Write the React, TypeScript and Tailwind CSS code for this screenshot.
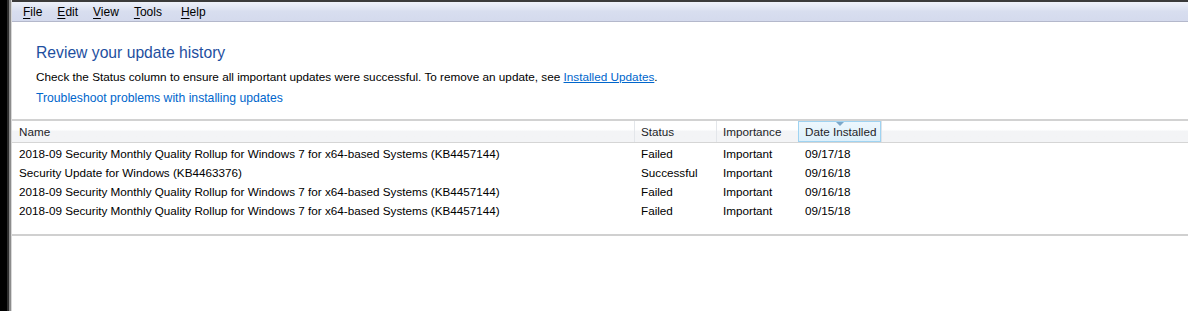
import React from 'react';

const menu = [
	{ key: 'F', rest: 'ile' },
	{ key: 'E', rest: 'dit' },
	{ key: 'V', rest: 'iew' },
	{ key: 'T', rest: 'ools' },
	{ key: 'H', rest: 'elp' },
];

const updates = [
	{ name: '2018-09 Security Monthly Quality Rollup for Windows 7 for x64-based Systems (KB4457144)', status: 'Failed', date: '09/17/18' },
	{ name: 'Security Update for Windows (KB4463376)', status: 'Successful', date: '09/16/18' },
	{ name: '2018-09 Security Monthly Quality Rollup for Windows 7 for x64-based Systems (KB4457144)', status: 'Failed', date: '09/16/18' },
	{ name: '2018-09 Security Monthly Quality Rollup for Windows 7 for x64-based Systems (KB4457144)', status: 'Failed', date: '09/15/18' },
];

export default function App() {
	return (
		<div className="flex w-[1188px] h-[311px] bg-black overflow-hidden font-['Liberation_Sans',Arial,sans-serif] text-[11.7px]">
			{/* window frame on the left */}
			<div className="flex shrink-0">
				<div className="w-[7px] bg-black" />
				<div className="w-[2px] bg-[#2e2e2e]" />
				<div className="w-[2px] bg-[#8c8c8c]" />
				<div className="w-[1px] bg-[#d8d8d8]" />
			</div>

			<div className="flex flex-col flex-1 bg-white">
				<div className="h-[2px] bg-[#3a3a3a]" />
				{/* menu bar */}
				<div className="h-[20px] flex items-center pl-[11px] bg-gradient-to-b from-[#eef1f9] via-[#d8deef] to-[#d4daed] border-b border-[#b4b8cb] text-[#000] text-[12px]">
					{menu.map((m, i) => (
						<span key={m.key} className={i === 0 ? '' : i === 4 ? 'ml-[19px]' : 'ml-[15px]'}>
							<span className="underline underline-offset-2">{m.key}</span>
							{m.rest}
						</span>
					))}
				</div>

				{/* heading block */}
				<div className="pl-[24px] pt-[21px]">
					<h1 className="h-[20px] flex items-center text-[15.7px] text-[#1e4fa0]">Review your update history</h1>
					<p className="mt-[5px] h-[18px] flex items-center text-black text-[11.75px]">
						Check the Status column to ensure all important updates were successful. To remove an update, see&nbsp;
						<span className="text-[#0066cc] underline">Installed Updates</span>.
					</p>
					<p className="mt-[3px] h-[18px] flex items-center text-[#0066cc] text-[12.2px]">Troubleshoot problems with installing updates</p>
				</div>

				{/* update list */}
				<div className="mt-[12px] border-t-2 border-[#d2d2d2]">
					<div className="flex h-[22px] bg-gradient-to-b from-white from-40% to-[#f3f4f6] to-50% border-b border-[#d5d5d5] text-[#1e1e28]">
						<div className="w-[622px] pl-[7px] flex items-center">Name</div>
						<div className="w-[82px] pl-[6px] flex items-center border-l border-[#e3e6ea]">Status</div>
						<div className="w-[82px] pl-[6px] flex items-center border-l border-[#e3e6ea]">Importance</div>
						<div className="relative w-[83px] pl-[6px] flex items-center border border-[#9fd3f1] bg-gradient-to-b from-[#edf7fd] to-[#dceffa]">
							Date Installed
							<svg className="absolute left-[37px] top-[0px]" width="8" height="4" viewBox="0 0 8 4">
								<path d="M0 0 H8 L4 4 Z" fill="#7ca7c9" />
							</svg>
						</div>
						<div className="flex-1 border-l border-[#dfe3e8]" />
					</div>
					<div className="pt-[1px] h-[93px] border-b-2 border-[#d0d0d0]">
						{updates.map((u, i) => (
							<div key={i} className="flex h-[19px] items-center text-black">
								<div className="w-[623px] pl-[7px] whitespace-nowrap">{u.name}</div>
								<div className="w-[82px] pl-[6px]">{u.status}</div>
								<div className="w-[82px] pl-[6px]">Important</div>
								<div className="w-[83px] pl-[6px]">{u.date}</div>
							</div>
						))}
					</div>
				</div>
				<div className="flex-1 bg-white" />
			</div>
		</div>
	);
}
